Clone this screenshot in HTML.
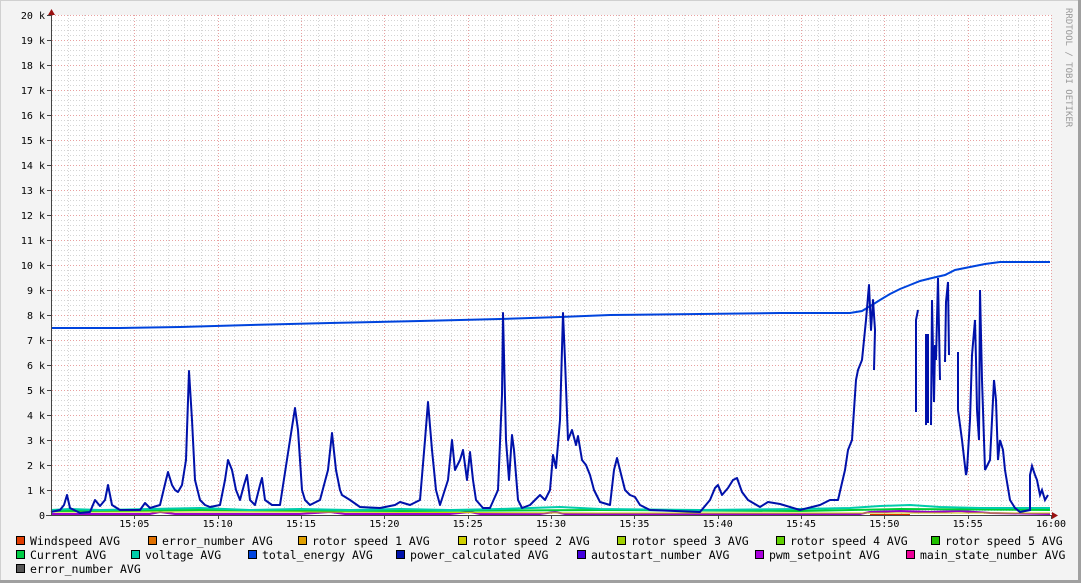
<!DOCTYPE html>
<html><head><meta charset="utf-8"><style>
html,body{margin:0;padding:0;background:#f3f3f3}
svg{display:block}
text{font-family:"DejaVu Sans Mono","Liberation Mono",monospace}
</style></head><body>
<svg width="1081" height="583" viewBox="0 0 1081 583" xmlns="http://www.w3.org/2000/svg">
<defs>
<pattern id="hmin" x="0" y="15" width="4" height="5" patternUnits="userSpaceOnUse"><rect x="0" y="0" width="1" height="1" fill="#d8d8d8"/></pattern>
</defs>
<rect x="0" y="0" width="1081" height="583" fill="#f3f3f3"/>
<rect x="0" y="0" width="1081" height="1" fill="#d0d0d0"/>
<rect x="0" y="0" width="1" height="583" fill="#d0d0d0"/>
<rect x="1078" y="0" width="3" height="583" fill="#a0a0a0"/>
<rect x="0" y="580" width="1081" height="3" fill="#a0a0a0"/>
<rect x="51" y="15" width="1000" height="500" fill="#ffffff"/>
<!-- minor grid -->
<g stroke="#dcdcdc" stroke-width="1" stroke-dasharray="1,2" shape-rendering="crispEdges">
<path id="hm" d=""/>
</g>
<g id="grid" shape-rendering="crispEdges"></g>
<text x="1066" y="8" font-size="9" fill="#999" transform="rotate(90 1066 8)">RRDTOOL / TOBI OETIKER</text>
<g id="ylab" font-size="10" fill="#000" text-anchor="end"></g>
<g id="xlab" font-size="10" fill="#000" text-anchor="middle"></g>
<!-- data -->
<polyline fill="none" stroke="#9a00cc" stroke-width="2" points="51,514 150,514 160,512 175,514 300,514 330,512 345,514 450,514 470,512 480,514 540,514 555,512 565,514 700,514 860,514 870,512 900,511 930,512 960,511 990,513 1050,514"/>
<polyline fill="none" stroke="#e03000" stroke-width="2" points="870,515 910,515"/>
<polyline fill="none" stroke="#cccc00" stroke-width="1" points="51,512 300,512 600,513 1050,513"/>
<polyline fill="none" stroke="#00cc33" stroke-width="2" points="51,511 200,510 400,511 600,510 800,511 900,509 1050,510"/>
<polyline fill="none" stroke="#00ccaa" stroke-width="2" points="51,510 70,509 100,510 150,509 200,508 250,510 300,509 350,510 400,509 450,510 500,509 560,507 600,509 700,510 800,509 850,508 880,506 910,505 940,507 980,508 1050,508"/>
<polyline fill="none" stroke="#0044dd" stroke-width="2" points="51,328 120,328 180,327 250,325 330,323 420,321 500,319 560,317 610,315 700,314 780,313 850,313 862,311 872,305 880,300 890,294 900,289 910,285 920,281 932,278 945,275 955,270 970,267 985,264 1000,262 1050,262"/>
<polyline fill="none" stroke="#0011aa" stroke-width="2" stroke-linejoin="round" points="51,512 60,510 64,505 67,495 70,508 80,513 90,512 95,500 100,506 105,500 108,485 112,505 120,510 140,510 145,503 150,508 160,505 166,480 168,472 172,485 175,490 178,492 182,485 186,460 189,371 192,420 195,480 200,500 205,505 210,507 215,506 220,505 225,480 228,460 232,470 236,490 240,500 244,485 247,475 250,500 255,505 260,485 262,478 265,500 272,505 280,505 290,440 295,408 298,430 302,490 305,500 310,505 320,500 328,470 332,433 336,470 340,490 342,495 350,500 360,507 380,508 395,505 400,502 410,505 420,500 425,440 428,402 432,450 436,490 440,505 448,480 452,440 455,470 460,460 463,450 467,480 470,452 473,480 476,500 483,508 490,508 498,490 502,395 503,313 506,440 509,480 512,435 514,450 518,500 522,508 530,505 535,500 540,495 545,500 550,490 553,455 556,468 560,420 563,313 565,360 568,440 572,430 576,445 578,436 582,460 586,465 590,475 594,490 600,502 610,505 614,470 617,458 620,470 625,490 630,495 635,497 640,505 650,510 700,512 710,500 715,488 718,485 722,495 728,488 733,480 737,478 742,492 748,500 760,507 768,502 780,504 800,510 820,505 830,500 838,500 845,470 848,450 852,440 856,380 858,370 862,360 866,320 869,285 871,330 873,300 875,330 874,370 ,"/>
<polyline fill="none" stroke="#0011aa" stroke-width="2" points="916,412 916,320 918,310"/>
<polyline fill="none" stroke="#0011aa" stroke-width="2" points="926,425 926,335 928,335 928,423"/>
<polyline fill="none" stroke="#0011aa" stroke-width="2" points="931,425 932,300 934,402 935,345 936,360 938,278 940,380"/>
<polyline fill="none" stroke="#0011aa" stroke-width="2" points="945,362 946,302 948,282 949,355"/>
<polyline fill="none" stroke="#0011aa" stroke-width="2" points="958,352 958,410 962,440 966,475 967,470 970,420 972,355 975,320 976,360 977,410 979,440 980,290 982,380 985,470 990,460 994,380 996,400 998,460 1000,440 1003,450 1005,470 1010,500 1015,508 1020,512 1030,510 1030,475 1032,466 1035,475 1037,480 1040,495 1042,490 1045,500 1048,495"/>
<!-- axes -->
<rect x="51" y="10" width="1" height="506" fill="#444"/>
<rect x="46" y="515" width="1008" height="1" fill="#444"/>
<polygon points="48,15 55,15 51.5,9" fill="#9a1111"/>
<polygon points="1052,512 1052,519 1058,515.5" fill="#9a1111"/>
<!-- legend -->
<g font-size="11.5" fill="#000" id="leg"></g>
<script>
var ns="http://www.w3.org/2000/svg";
function el(t,a,p){var e=document.createElementNS(ns,t);for(var k in a)e.setAttribute(k,a[k]);(p||document.getElementById('grid')).appendChild(e);return e;}
var g=document.getElementById('grid');
// horizontal minor grid
var d="";for(var y=15;y<515;y+=5){if((y-15)%25)d+="M52 "+(y+0.5)+"H1051";}
el('path',{d:d,stroke:"#d4d4d4","stroke-dasharray":"1,2"},g);
// vertical minor
d="";for(var i=1;i<60;i++){if(i%5){var x=Math.round(51+i*1000/60)+0.5;d+="M"+x+" 15V515";}}
el('path',{d:d,stroke:"#d4d4d4","stroke-dasharray":"1,2"},g);
// major
d="";for(var y=15;y<515;y+=25){d+="M52 "+(y+0.5)+"H1051";}
for(var i=1;i<=12;i++){var x=Math.round(51+i*1000/12)+0.5;d+="M"+x+" 15V515";}
el('path',{d:d,stroke:"#e8a0a0","stroke-dasharray":"1,2"},g);
// ticks
d="";for(var y=15;y<=515;y+=25){d+="M47 "+(y+0.5)+"H51";}
for(var i=1;i<=12;i++){var x=Math.round(51+i*1000/12)+0.5;d+="M"+x+" 515V519";}
el('path',{d:d,stroke:"#444"},g);
var yl=document.getElementById('ylab');
for(var k=0;k<=20;k++){var t=el('text',{x:45,y:515-k*25+4},yl);t.textContent=k==0?"0":k+" k";}
var xl=document.getElementById('xlab');
var lab=["15:05","15:10","15:15","15:20","15:25","15:30","15:35","15:40","15:45","15:50","15:55","16:00"];
for(var i=0;i<12;i++){var t=el('text',{x:51+(i+1)*1000/12,y:527},xl);t.textContent=lab[i];}
var leg=document.getElementById('leg');
var rows=[[[16,"#e03c00","Windspeed AVG"],[148,"#e07000","error_number AVG"],[298,"#e0a000","rotor speed 1 AVG"],[458,"#d0d000","rotor speed 2 AVG"],[617,"#a0d000","rotor speed 3 AVG"],[776,"#60d000","rotor speed 4 AVG"],[931,"#20c000","rotor speed 5 AVG"]],
[[16,"#00cc44","Current AVG"],[131,"#00ccaa","voltage AVG"],[248,"#0044dd","total_energy AVG"],[396,"#0011aa","power_calculated AVG"],[577,"#4400dd","autostart_number AVG"],[755,"#aa00dd","pwm_setpoint AVG"],[906,"#ee0099","main_state_number AVG"]],
[[16,"#555555","error_number AVG"]]];
for(var r=0;r<3;r++){var cy=541+r*14;rows[r].forEach(function(it){
el('rect',{x:it[0]+0.5,y:cy-4.5,width:8,height:8,fill:it[1],stroke:"#000","stroke-width":1},leg);
var t=el('text',{x:it[0]+14,y:cy+4},leg);t.textContent=it[2];});}
</script>
</svg>
</body></html>
